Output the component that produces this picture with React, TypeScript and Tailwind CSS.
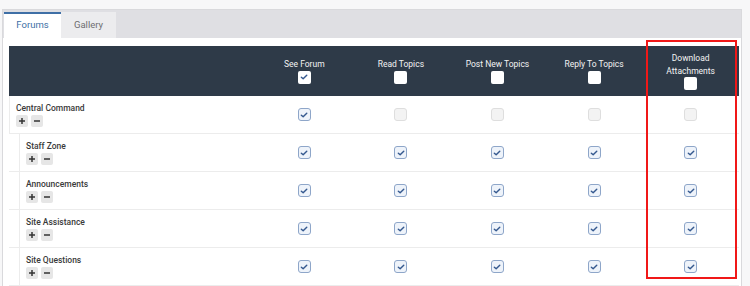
const columns = ['See Forum', 'Read Topics', 'Post New Topics', 'Reply To Topics', 'Download Attachments']

type Row = { name: string; child: boolean; perms: ('on' | 'off')[] }

const rows: Row[] = [
  { name: 'Central Command', child: false, perms: ['on', 'off', 'off', 'off', 'off'] },
  { name: 'Staff Zone', child: true, perms: ['on', 'on', 'on', 'on', 'on'] },
  { name: 'Announcements', child: true, perms: ['on', 'on', 'on', 'on', 'on'] },
  { name: 'Site Assistance', child: true, perms: ['on', 'on', 'on', 'on', 'on'] },
  { name: 'Site Questions', child: true, perms: ['on', 'on', 'on', 'on', 'on'] },
]

function Check({ className }: { className: string }) {
  return (
    <svg viewBox="0 0 12 12" className={className} fill="none">
      <path d="M2.8 6.2 L5 8.2 L9.3 3.9" stroke="currentColor" strokeWidth="1.7" strokeLinecap="round" strokeLinejoin="round" />
    </svg>
  )
}

function Box({ state }: { state: 'on' | 'off' }) {
  if (state === 'off') {
    return <span className="block h-[13px] w-[13px] rounded-[3px] border border-[#dedede] bg-[#f3f3f3]" />
  }
  return (
    <span className="flex h-[13px] w-[13px] items-center justify-center rounded-[3px] border border-[#8ea6c9] bg-[#eef3fa] text-[#35598f]">
      <Check className="h-[10px] w-[10px]" />
    </span>
  )
}

function HeadBox({ checked }: { checked: boolean }) {
  return (
    <span className="flex h-[13px] w-[13px] items-center justify-center rounded-[2px] bg-white text-[#35598f]">
      {checked && <Check className="h-[10px] w-[10px]" />}
    </span>
  )
}

function Toggle({ plus }: { plus: boolean }) {
  return (
    <span className="flex h-[12px] w-[12px] items-center justify-center rounded-[2px] bg-[#e6e6e6]">
      <svg viewBox="0 0 8 8" className="h-[8px] w-[8px]">
        <path d="M1 4 H7" stroke="#333" strokeWidth="1.5" />
        {plus && <path d="M4 1 V7" stroke="#333" strokeWidth="1.5" />}
      </svg>
    </span>
  )
}

export default function App() {
  return (
    <div className="relative h-[286px] w-[750px] overflow-hidden bg-[#f7f7f8] font-['Roboto',sans-serif]">
      <div className="ml-[2px] mt-[9px] w-[740px] border-x border-t border-[#d9d9dc]">
        <div className="flex h-[28px] items-end bg-[#dfdfe3] pl-px">
          <div className="flex h-[26px] w-[57px] items-center justify-center border-t-2 border-[#3f6fa6] bg-white pb-[1px] text-[9.5px] text-[#3d6fa5]">
            Forums
          </div>
          <div className="flex h-[26px] w-[55px] items-center justify-center bg-[#ececee] text-[9.5px] text-[#6e6e70]">
            Gallery
          </div>
        </div>

        <div className="bg-white px-[6px] pt-[8px]">
          <div className="w-[730px]">
            <div className="flex h-[50px] bg-[#2e3a48] text-[8.5px] text-[#f3f3f3]">
              <div className="w-[247px]" />
              {columns.map((c, i) => (
                <div key={c} className="flex w-[96.6px] flex-col items-center justify-center text-center leading-[12.5px]">
                  <span className={i === 4 ? 'w-[60px]' : ''}>{c}</span>
                  <HeadBox checked={i === 0} />
                </div>
              ))}
            </div>

            {rows.map((r) => (
              <div key={r.name} className="flex h-[38px] border-b border-[#ececec]">
                <div className={`w-[247px] ${r.child ? 'pl-[10px]' : ''}`}>
                  <div className="h-full border-l border-[#ececec] pl-[6px] pt-[7px]">
                    <div className="text-[8.5px] font-medium leading-[11px] text-[#3a3a3a]">{r.name}</div>
                    <div className="mt-[1px] flex gap-[3px]">
                      <Toggle plus />
                      <Toggle plus={false} />
                    </div>
                  </div>
                </div>
                {r.perms.map((p, i) => (
                  <div key={i} className="flex w-[96.6px] items-center justify-center">
                    <Box state={p} />
                  </div>
                ))}
              </div>
            ))}
          </div>
        </div>
      </div>

      <div className="absolute left-[646px] top-[40px] h-[239px] w-[91px] border-2 border-[#f01818]" />
    </div>
  )
}
